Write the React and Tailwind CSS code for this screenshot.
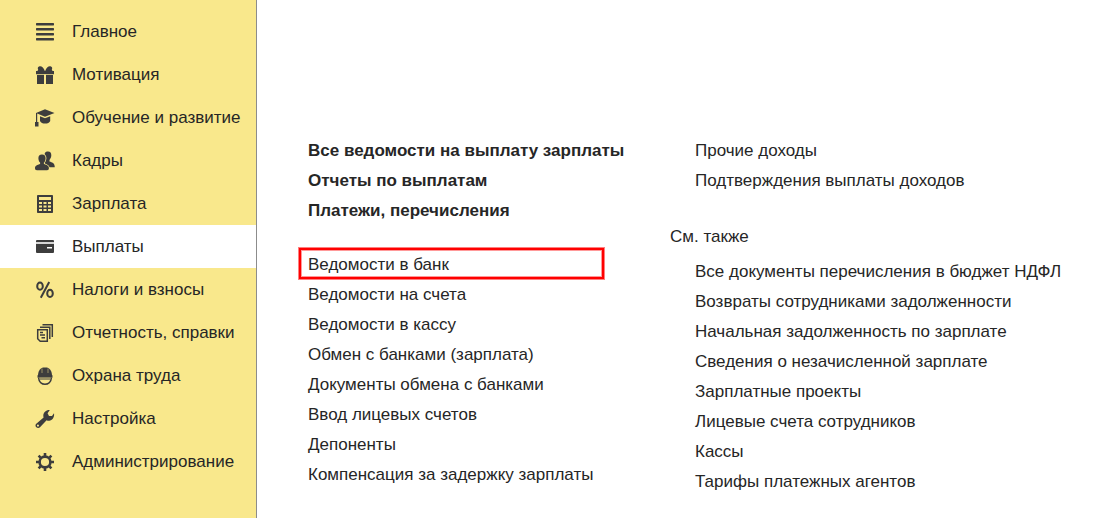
const INK = '#3d3d3d';
const SHADE = '#f9e78c';

function Icon({ children }) {
  return (
    <svg className="size-5 shrink-0" viewBox="0 0 20 20" fill={INK} aria-hidden="true">
      {children}
    </svg>
  );
}

const icons = {
  lines: (
    <Icon>
      <rect x="1" y="1" width="18" height="2.4" rx="0.6" />
      <rect x="1" y="6" width="18" height="2.4" rx="0.6" />
      <rect x="1" y="11" width="18" height="2.4" rx="0.6" />
      <rect x="1" y="16" width="18" height="2.4" rx="0.6" />
    </Icon>
  ),
  gift: (
    <Icon>
      <path d="M1 6h18v3.200H1zM2 10h7v9H2zM11 10h7v9h-7z" />
      <path d="M9.800 6C8.800 2.500 6.500.8 4.600 1.200 3 1.600 2.200 3.200 3.200 4.600L2.500 6zM10.200 6c1-3.500 3.300-5.200 5.200-4.800 1.600.4 2.400 2 1.400 3.400l.7 1.400z" />
      <path d="M9.300 9.200h1.400v10H9.300z" fill={SHADE} />
    </Icon>
  ),
  cap: (
    <Icon>
      <path d="M10 1.200 19.500 5 10 8.800 2.200 5.600V14H3.500v4.500H0V14h1V5z" />
      <path d="M5 8.200 10 10.200l5.200-2v4.800c-1 3.400-9 3.400-10.200 0z" />
    </Icon>
  ),
  people: (
    <Icon>
      <path d="M9.500 3.200C10 1 11.400.6 13 .6c2.400 0 3.400 1.600 3.300 4-.1 2-1 3.400-1.800 4.400v1.400c2.600.8 5 1.600 5.200 4.800v1h-6l-5-5z" />
      <path
        stroke={SHADE}
        strokeWidth="1.600"
        paintOrder="stroke"
        d="M7 3.400c2.500 0 3.700 1.600 3.600 4-.1 1.900-.8 3.300-1.700 4.200v1.500c2.800.8 5 1.600 5 4.200 0 1.500-.8 1.900-1.800 1.900H1.900C.8 19.200 0 18.800 0 17.300c0-2.600 2.300-3.400 5.100-4.200v-1.500c-.9-.9-1.600-2.300-1.700-4.200-.1-2.400 1.100-4 3.600-4z"
      />
    </Icon>
  ),
  calculator: (
    <Icon>
      <rect x="2" y="1" width="16" height="18" rx="0.8" />
      <path
        fill={SHADE}
        d="M4 3h12v3H4zM4 8h3v2H4zM8.500 8h3v2h-3zM13 8h3v2h-3zM4 11.500h3v2H4zM8.500 11.500h3v2h-3zM13 11.500h3v2h-3zM4 15h3v2H4zM8.500 15h3v2h-3zM13 15h3v2h-3z"
      />
    </Icon>
  ),
  card: (
    <Icon>
      <path d="M2 3h16q1 0 1 1v2H1V4q0-1 1-1zM1 8h18v7q0 1-1 1H2q-1 0-1-1z" />
      <path d="M1 5h18v2H1z" fill="#d6d6d6" />
      <path d="M1 7h18v2H1z" />
      <path d="M12 10h5v1.500h-5z" fill="#ffffff" />
    </Icon>
  ),
  percent: (
    <Icon>
      <g fill="none" stroke={INK}>
        <ellipse cx="5" cy="6.200" rx="2.800" ry="3.600" strokeWidth="2" />
        <ellipse cx="15" cy="13.400" rx="2.800" ry="3.600" strokeWidth="2" />
        <path d="M14.200 2 5.800 17.800" strokeWidth="2" />
      </g>
    </Icon>
  ),
  papers: (
    <Icon>
      <g fill="none" stroke={INK} strokeWidth="1.500">
        <path d="M2.700 6.700h9.600v11.600H5.200l-2.500-2.500z" />
        <path d="M5 4.200h9.800V16M7.500 1.700h9.800v12.300" />
        <path d="M5 9.500h3M5 12h5M6.500 14.800h3.500" />
      </g>
    </Icon>
  ),
  helmet: (
    <Icon>
      <path d="M3 8.500C3.400 4.500 5.500 2.200 8 1.500h4c2.500.7 4.600 3 5 7v1.800H3z" />
      <path d="M2.500 9.200h15v2.400h-15z" />
      <path d="M3.600 11.500c.5 9 12.300 9 12.800 0" fill="none" stroke={INK} strokeWidth="1.600" />
      <path d="M7 2.500v4.500M13 2.500v4.500" stroke={SHADE} strokeWidth="0.500" />
      <path d="M5 13h10" stroke={INK} strokeWidth="1" />
    </Icon>
  ),
  wrench: (
    <Icon>
      <path
        fillRule="evenodd"
        d="M14.800 1 12.600 4.200 14 7l3 .1L19 4.200c.6 3.900-1.400 7.200-4.700 7.500-1 .1-1.900-.1-2.700-.5L5 18.200C2.900 20.200-.9 17.600 1 15l7.600-6.500C7.300 4.300 10.500.7 14.800 1zM2.900 15.600a1 1 0 1 0 .1 2 1 1 0 0 0-.1-2z"
      />
    </Icon>
  ),
  gear: (
    <Icon>
      <circle cx="10" cy="10" r="5.400" fill="none" stroke={INK} strokeWidth="2.600" />
      <g stroke={INK} strokeWidth="2.600">
        <path d="M10 1v3M10 16v3M1 10h3M16 10h3M3.600 3.600l2 2M14.400 14.400l2 2M3.600 16.400l2-2M14.400 5.600l2-2" />
      </g>
    </Icon>
  ),
};

const sections = [
  { label: 'Главное', icon: 'lines' },
  { label: 'Мотивация', icon: 'gift' },
  { label: 'Обучение и развитие', icon: 'cap' },
  { label: 'Кадры', icon: 'people' },
  { label: 'Зарплата', icon: 'calculator' },
  { label: 'Выплаты', icon: 'card', active: true },
  { label: 'Налоги и взносы', icon: 'percent' },
  { label: 'Отчетность, справки', icon: 'papers' },
  { label: 'Охрана труда', icon: 'helmet' },
  { label: 'Настройка', icon: 'wrench' },
  { label: 'Администрирование', icon: 'gear' },
];

const mainLinks = ['Все ведомости на выплату зарплаты', 'Отчеты по выплатам', 'Платежи, перечисления'];

const paymentLinks = [
  'Ведомости в банк',
  'Ведомости на счета',
  'Ведомости в кассу',
  'Обмен с банками (зарплата)',
  'Документы обмена с банками',
  'Ввод лицевых счетов',
  'Депоненты',
  'Компенсация за задержку зарплаты',
];

const incomeLinks = ['Прочие доходы', 'Подтверждения выплаты доходов'];

const relatedLinks = [
  'Все документы перечисления в бюджет НДФЛ',
  'Возвраты сотрудниками задолженности',
  'Начальная задолженность по зарплате',
  'Сведения о незачисленной зарплате',
  'Зарплатные проекты',
  'Лицевые счета сотрудников',
  'Кассы',
  'Тарифы платежных агентов',
];

function LinkList({ items, className = '', highlighted }) {
  return (
    <ul className={className}>
      {items.map((item) => (
        <li key={item} className="relative">
          {item === highlighted && (
            <span className="pointer-events-none absolute -top-[2px] bottom-px -left-[9px] w-[305px] border-2 border-[#ff0000] ring-1 inset-ring-1 ring-[#ff0000]/50 inset-ring-[#ff0000]/40" />
          )}
          <a href="#" className="block leading-[30px] whitespace-nowrap">
            {item}
          </a>
        </li>
      ))}
    </ul>
  );
}

export default function App() {
  return (
    <div className="flex min-h-screen bg-white font-['Liberation_Sans',Arial,sans-serif] text-[17px] text-[#262626]">
      <nav className="w-[257px] shrink-0 border-r border-[#8c8c8c] bg-[#f9e88c] pt-[10px]">
        <ul>
          {sections.map(({ label, icon, active }) => (
            <li key={label}>
              <a
                href="#"
                aria-current={active ? 'page' : undefined}
                className={`flex h-[43px] items-center gap-[17px] pl-[35px] whitespace-nowrap ${active ? 'bg-white' : ''}`}
              >
                {icons[icon]}
                {label}
              </a>
            </li>
          ))}
        </ul>
      </nav>
      <main className="flex grow gap-[53px] pt-[136px] pl-[51px]">
        <div className="w-[309px] shrink-0">
          <LinkList items={mainLinks} className="font-bold" />
          <LinkList items={paymentLinks} className="mt-6" highlighted="Ведомости в банк" />
        </div>
        <div className="grow">
          <LinkList items={incomeLinks} className="pl-[25px]" />
          <h2 className="mt-[26px] leading-[30px]">См. также</h2>
          <LinkList items={relatedLinks} className="mt-[5px] pl-[25px]" />
        </div>
      </main>
    </div>
  );
}
